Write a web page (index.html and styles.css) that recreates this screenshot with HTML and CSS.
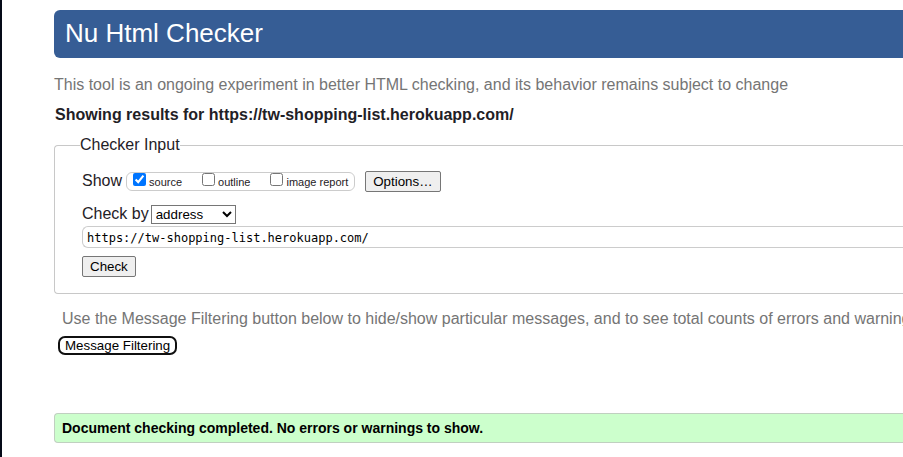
FILE: index.html
```html
<!DOCTYPE html>
<html lang="en">
<head>
<meta charset="utf-8">
<title>Nu Html Checker</title>
<link rel="stylesheet" href="styles.css">
</head>
<body>
<header class="banner"><h1>Nu Html Checker</h1></header>
<main>
  <p class="intro">This tool is an ongoing experiment in better HTML checking, and its behavior remains subject to change</p>
  <h2 class="results-title">Showing results for https://tw-shopping-list.herokuapp.com/</h2>
  <form>
    <fieldset class="checker">
      <legend>Checker Input</legend>
      <div class="row show-row">
        <span>Show</span>
        <div class="show-options">
          <label><input type="checkbox" checked><span>source</span></label>
          <label><input type="checkbox"><span>outline</span></label>
          <label><input type="checkbox"><span>image report</span></label>
        </div>
        <button type="button" class="button options">Options…</button>
      </div>
      <div class="row check-row">
        <label for="method">Check by</label>
        <select id="method"><option>address</option></select>
      </div>
      <input class="address" type="text" aria-label="Address" value="https://tw-shopping-list.herokuapp.com/">
      <button type="button" class="button">Check</button>
    </fieldset>
  </form>
  <p class="hint">Use the Message Filtering button below to hide/show particular messages, and to see total counts of errors and warnings.</p>
  <button type="button" class="filtering">Message Filtering</button>
  <p class="success">Document checking completed. No errors or warnings to show.</p>
</main>
</body>
</html>
```
FILE: styles.css
```css
* { box-sizing: border-box; }
html { background: #fff; }
body {
  margin: 0;
  min-height: 100vh;
  padding: 10px 0 0 52px;
  border-left: 2px solid #050a18;
  overflow: hidden;
  font: 16px/20px "Liberation Sans", Arial, sans-serif;
  color: #1f2126;
}
h1, h2, p { margin: 0; }
.banner {
  padding: 8px 11px 10px;
  border-radius: 6px 0 0 6px;
  background: #365d95;
  color: #fff;
}
h1 { font-size: 26px; line-height: 30px; font-weight: 400; }
.intro { margin-top: 17px; color: #757575; }
.results-title { margin: 10px 0 10px 1px; font-size: 16px; line-height: 20px; }
.checker {
  min-width: 0;
  margin: 0;
  padding: 15px 0 16px 27px;
  border: 1px solid #c8c8c8;
  border-right: 0;
  border-radius: 4px 0 0 4px;
}
legend { margin-left: -2px; padding: 0; }
.row { display: flex; align-items: center; }
.show-row { height: 22px; }
.show-options {
  display: flex;
  gap: 20px;
  height: 19px;
  margin: 0 10px 0 4px;
  padding: 0 6px;
  border: 1px solid #ccc;
  border-radius: 6px;
  font-size: 11px;
  line-height: 19px;
}
.show-options label { display: flex; gap: 3px; }
.show-options input { width: 13px; height: 13px; margin: 0; }
.button, select, .filtering {
  font-family: "Liberation Sans", Arial, sans-serif;
  color: #000;
}
.button {
  height: 21px;
  padding: 0 7px;
  border: 1px solid #767676;
  border-radius: 2px;
  background: #efefef;
}
.check-row { gap: 2px; height: 20px; margin: 12px 0 2px; }
select {
  width: 85px;
  height: 19px;
  padding: 0;
  border: 1px solid #767676;
  border-radius: 0;
  background: #fff;
}
.address {
  display: block;
  width: 100%;
  height: 22px;
  margin-bottom: 8px;
  padding: 2px 4px 1px;
  border: 1px solid #ccc;
  border-right: 0;
  border-radius: 6px 0 0 6px;
  font: 12px "DejaVu Sans Mono", monospace;
  color: #000;
}
.hint { margin: 15px 0 7px 8px; color: #757575; white-space: nowrap; }
.filtering {
  display: block;
  height: 19px;
  margin-left: 4px;
  padding: 0 5px;
  border: 2px solid #101010;
  border-radius: 7px;
  background: #fff;
}
.success {
  margin-top: 58px;
  padding: 4px 7px;
  border: 1px solid #c0d0c0;
  border-right: 0;
  border-radius: 4px 0 0 4px;
  background: #cfc;
  color: #000;
  font-size: 14px;
  font-weight: 700;
}
```
